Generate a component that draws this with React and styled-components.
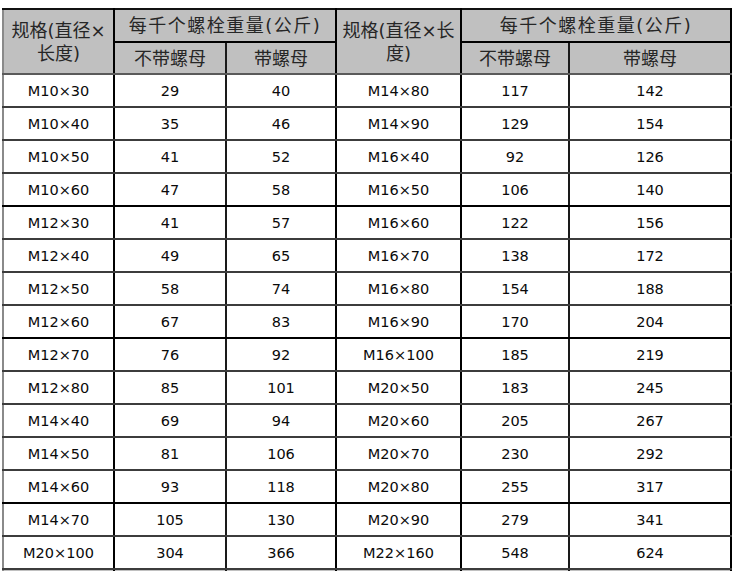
import React from 'react';
import styled, { createGlobalStyle } from 'styled-components';

const GlobalStyle = createGlobalStyle`
  html, body {
    margin: 0;
    padding: 0;
    background: #ffffff;
    overflow: hidden;
  }
`;

const Page = styled.div`
  padding: 8px 0 0 2px;
  width: 749px;
  height: 571px;
  box-sizing: border-box;
  overflow: hidden;
`;

const Table = styled.table`
  border-collapse: collapse;
  table-layout: fixed;
  width: 728px;
  border-top: 2px solid #111;
  border-left: 2px solid #8a8a8a;
  border-right: 2px solid #9a9a9a;
  font-family: "DejaVu Sans", "Noto Sans CJK SC", sans-serif;
`;

const HeadCell = styled.th`
  background: #c0c0c0;
  color: #262626;
  font-weight: normal;
  font-size: 18px;
  line-height: 23px;
  padding: 0 4px;
  text-align: center;
  vertical-align: middle;
  letter-spacing: ${p => (p.$wide ? '1.5px' : '0')};
  border-right: 2px solid ${p => (p.$thin ? '#1a1a1a' : '#000')};
  border-bottom: ${p => (p.$split ? '2px solid #000' : '2px solid #5a5a5a')};
`;

const HeadRow = styled.tr`
  height: ${p => p.$h}px;
`;

const BodyRow = styled.tr`
  height: 33px;
`;

const Cell = styled.td`
  color: #0a0a0a;
  font-size: 14.5px;
  text-align: center;
  vertical-align: middle;
  padding: 0;
  border-right: 2px solid ${p => (p.$thin ? '#1a1a1a' : '#000')};
  border-bottom: 2px solid ${p => (p.$thick ? '#000' : '#3c3c3c')};
`;

const TailCell = styled.td`
  background: #c0c0c0;
  height: 20px;
  border-right: 2px solid ${p => (p.$thin ? '#1a1a1a' : '#000')};
`;

const rows = [
  ['M10×30', 29, 40, 'M14×80', 117, 142],
  ['M10×40', 35, 46, 'M14×90', 129, 154],
  ['M10×50', 41, 52, 'M16×40', 92, 126],
  ['M10×60', 47, 58, 'M16×50', 106, 140],
  ['M12×30', 41, 57, 'M16×60', 122, 156],
  ['M12×40', 49, 65, 'M16×70', 138, 172],
  ['M12×50', 58, 74, 'M16×80', 154, 188],
  ['M12×60', 67, 83, 'M16×90', 170, 204],
  ['M12×70', 76, 92, 'M16×100', 185, 219],
  ['M12×80', 85, 101, 'M20×50', 183, 245],
  ['M14×40', 69, 94, 'M20×60', 205, 267],
  ['M14×50', 81, 106, 'M20×70', 230, 292],
  ['M14×60', 93, 118, 'M20×80', 255, 317],
  ['M14×70', 105, 130, 'M20×90', 279, 341],
  ['M20×100', 304, 366, 'M22×160', 548, 624],
];

// rows whose bottom line is drawn heavier in the scan
const heavy = [3, 7, 12];
const thinCols = [1, 4];

const widths = [111, 112, 110, 125, 108, 162];

const App = () => (
  <Page>
    <GlobalStyle />
    <Table>
      <colgroup>
        {widths.map((w, i) => (
          <col key={i} style={{ width: w }} />
        ))}
      </colgroup>
      <thead>
        <HeadRow $h={33}>
          <HeadCell rowSpan={2}>规格(直径×长度)</HeadCell>
          <HeadCell colSpan={2} $split $wide>每千个螺栓重量(公斤)</HeadCell>
          <HeadCell rowSpan={2}>规格(直径×长度)</HeadCell>
          <HeadCell colSpan={2} $split $wide>每千个螺栓重量(公斤)</HeadCell>
        </HeadRow>
        <HeadRow $h={32}>
          <HeadCell $thin>不带螺母</HeadCell>
          <HeadCell>带螺母</HeadCell>
          <HeadCell $thin>不带螺母</HeadCell>
          <HeadCell>带螺母</HeadCell>
        </HeadRow>
      </thead>
      <tbody>
        {rows.map((r, i) => (
          <BodyRow key={r[0]}>
            {r.map((v, j) => (
              <Cell key={j} $thin={thinCols.includes(j)} $thick={heavy.includes(i)}>
                {v}
              </Cell>
            ))}
          </BodyRow>
        ))}
        <tr>
          {widths.map((w, j) => (
            <TailCell key={j} $thin={thinCols.includes(j)} />
          ))}
        </tr>
      </tbody>
    </Table>
  </Page>
);

export default App;
